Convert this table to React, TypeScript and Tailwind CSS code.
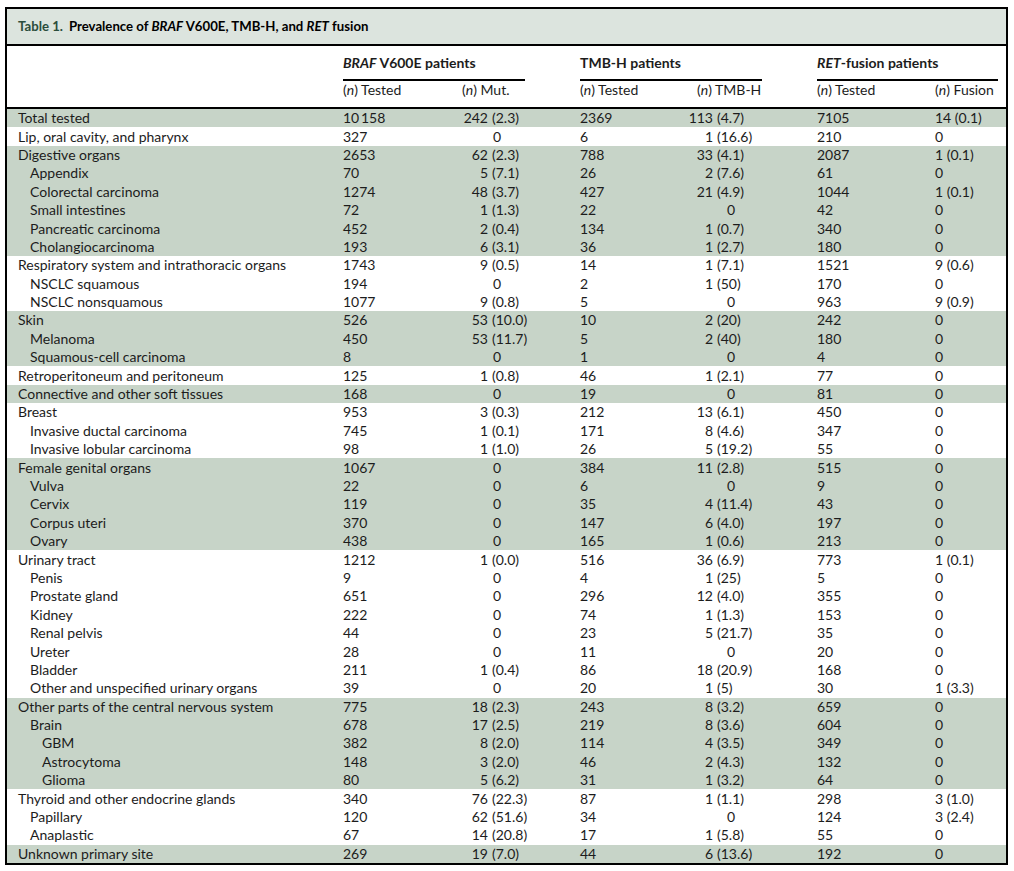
import React from "react";

type Row = { l: string; i: number; v: [string, string, string, string, string, string] };

const groups: { s: boolean; rows: Row[] }[] = [
  { s: true, rows: [{ l: "Total tested", i: 0, v: ["10\u2009158", "242 (2.3)", "2369", "113 (4.7)", "7105", "14 (0.1)"] }] },
  { s: false, rows: [{ l: "Lip, oral cavity, and pharynx", i: 0, v: ["327", "0", "6", "1 (16.6)", "210", "0"] }] },
  {
    s: true,
    rows: [
      { l: "Digestive organs", i: 0, v: ["2653", "62 (2.3)", "788", "33 (4.1)", "2087", "1 (0.1)"] },
      { l: "Appendix", i: 1, v: ["70", "5 (7.1)", "26", "2 (7.6)", "61", "0"] },
      { l: "Colorectal carcinoma", i: 1, v: ["1274", "48 (3.7)", "427", "21 (4.9)", "1044", "1 (0.1)"] },
      { l: "Small intestines", i: 1, v: ["72", "1 (1.3)", "22", "0", "42", "0"] },
      { l: "Pancreatic carcinoma", i: 1, v: ["452", "2 (0.4)", "134", "1 (0.7)", "340", "0"] },
      { l: "Cholangiocarcinoma", i: 1, v: ["193", "6 (3.1)", "36", "1 (2.7)", "180", "0"] },
    ],
  },
  {
    s: false,
    rows: [
      { l: "Respiratory system and intrathoracic organs", i: 0, v: ["1743", "9 (0.5)", "14", "1 (7.1)", "1521", "9 (0.6)"] },
      { l: "NSCLC squamous", i: 1, v: ["194", "0", "2", "1 (50)", "170", "0"] },
      { l: "NSCLC nonsquamous", i: 1, v: ["1077", "9 (0.8)", "5", "0", "963", "9 (0.9)"] },
    ],
  },
  {
    s: true,
    rows: [
      { l: "Skin", i: 0, v: ["526", "53 (10.0)", "10", "2 (20)", "242", "0"] },
      { l: "Melanoma", i: 1, v: ["450", "53 (11.7)", "5", "2 (40)", "180", "0"] },
      { l: "Squamous-cell carcinoma", i: 1, v: ["8", "0", "1", "0", "4", "0"] },
    ],
  },
  { s: false, rows: [{ l: "Retroperitoneum and peritoneum", i: 0, v: ["125", "1 (0.8)", "46", "1 (2.1)", "77", "0"] }] },
  { s: true, rows: [{ l: "Connective and other soft tissues", i: 0, v: ["168", "0", "19", "0", "81", "0"] }] },
  {
    s: false,
    rows: [
      { l: "Breast", i: 0, v: ["953", "3 (0.3)", "212", "13 (6.1)", "450", "0"] },
      { l: "Invasive ductal carcinoma", i: 1, v: ["745", "1 (0.1)", "171", "8 (4.6)", "347", "0"] },
      { l: "Invasive lobular carcinoma", i: 1, v: ["98", "1 (1.0)", "26", "5 (19.2)", "55", "0"] },
    ],
  },
  {
    s: true,
    rows: [
      { l: "Female genital organs", i: 0, v: ["1067", "0", "384", "11 (2.8)", "515", "0"] },
      { l: "Vulva", i: 1, v: ["22", "0", "6", "0", "9", "0"] },
      { l: "Cervix", i: 1, v: ["119", "0", "35", "4 (11.4)", "43", "0"] },
      { l: "Corpus uteri", i: 1, v: ["370", "0", "147", "6 (4.0)", "197", "0"] },
      { l: "Ovary", i: 1, v: ["438", "0", "165", "1 (0.6)", "213", "0"] },
    ],
  },
  {
    s: false,
    rows: [
      { l: "Urinary tract", i: 0, v: ["1212", "1 (0.0)", "516", "36 (6.9)", "773", "1 (0.1)"] },
      { l: "Penis", i: 1, v: ["9", "0", "4", "1 (25)", "5", "0"] },
      { l: "Prostate gland", i: 1, v: ["651", "0", "296", "12 (4.0)", "355", "0"] },
      { l: "Kidney", i: 1, v: ["222", "0", "74", "1 (1.3)", "153", "0"] },
      { l: "Renal pelvis", i: 1, v: ["44", "0", "23", "5 (21.7)", "35", "0"] },
      { l: "Ureter", i: 1, v: ["28", "0", "11", "0", "20", "0"] },
      { l: "Bladder", i: 1, v: ["211", "1 (0.4)", "86", "18 (20.9)", "168", "0"] },
      { l: "Other and unspecified urinary organs", i: 1, v: ["39", "0", "20", "1 (5)", "30", "1 (3.3)"] },
    ],
  },
  {
    s: true,
    rows: [
      { l: "Other parts of the central nervous system", i: 0, v: ["775", "18 (2.3)", "243", "8 (3.2)", "659", "0"] },
      { l: "Brain", i: 1, v: ["678", "17 (2.5)", "219", "8 (3.6)", "604", "0"] },
      { l: "GBM", i: 2, v: ["382", "8 (2.0)", "114", "4 (3.5)", "349", "0"] },
      { l: "Astrocytoma", i: 2, v: ["148", "3 (2.0)", "46", "2 (4.3)", "132", "0"] },
      { l: "Glioma", i: 2, v: ["80", "5 (6.2)", "31", "1 (3.2)", "64", "0"] },
    ],
  },
  {
    s: false,
    rows: [
      { l: "Thyroid and other endocrine glands", i: 0, v: ["340", "76 (22.3)", "87", "1 (1.1)", "298", "3 (1.0)"] },
      { l: "Papillary", i: 1, v: ["120", "62 (51.6)", "34", "0", "124", "3 (2.4)"] },
      { l: "Anaplastic", i: 1, v: ["67", "14 (20.8)", "17", "1 (5.8)", "55", "0"] },
    ],
  },
  { s: true, rows: [{ l: "Unknown primary site", i: 0, v: ["269", "19 (7.0)", "44", "6 (13.6)", "192", "0"] }] },
];

const gridCols = "grid grid-cols-[336px_119px_118px_117px_120px_118px_71px]";

function Split({ text, numW, zeroPad }: { text: string; numW: string; zeroPad: string }) {
  const idx = text.indexOf(" (");
  if (idx < 0) {
    return <span className={zeroPad}>{text}</span>;
  }
  const n = text.slice(0, idx);
  const p = text.slice(idx + 1);
  return (
    <span className="flex whitespace-nowrap">
      <span className={`${numW} flex justify-end shrink-0`}>{n}</span>
      <span className="pl-[4px]">{p}</span>
    </span>
  );
}

export default function App() {
  return (
    <div className="w-[1014px] h-[871px] bg-white pt-[7px] pl-[5px] text-[#1c1c1c]" style={{ fontFamily: "Lato, 'Open Sans', sans-serif" }}>
      <div className="w-[1003px] border-2 border-black">
        <div className="h-[37px] bg-[#dce4de] border-b-2 border-black flex items-center pl-[11px] text-[13.2px] font-bold">
          <span className="text-[#2b4d3c]">Table 1.</span>
          <span className="ml-[6px] text-black">
            Prevalence of <i>BRAF</i> V600E, TMB-H, and <i>RET</i> fusion
          </span>
        </div>
        <div className="h-[63px] border-b-2 border-black text-[14px]">
          <div className={`${gridCols} h-[35px] items-end`}>
            <div />
            <div className="col-span-2">
              <div className="font-bold pb-[9px] leading-none"><i>BRAF</i> V600E patients</div>
              <div className="h-[2px] w-[182px] bg-black" />
            </div>
            <div className="col-span-2">
              <div className="font-bold pb-[9px] leading-none">TMB-H patients</div>
              <div className="h-[2px] w-[182px] bg-black" />
            </div>
            <div className="col-span-2">
              <div className="font-bold pb-[9px] leading-none"><i>RET</i>-fusion patients</div>
              <div className="h-[2px] w-[181px] bg-black" />
            </div>
          </div>
          <div className={`${gridCols} h-[18px] items-center leading-none`}>
            <div />
            <div>(<i>n</i>) Tested</div>
            <div>(<i>n</i>) Mut.</div>
            <div>(<i>n</i>) Tested</div>
            <div>(<i>n</i>) TMB-H</div>
            <div>(<i>n</i>) Tested</div>
            <div>(<i>n</i>) Fusion</div>
          </div>
        </div>
        <div className="text-[14px]">
          {groups.map((g, gi) => (
            <div key={gi} className={g.s ? "bg-[#c7d4c8]" : "bg-white"}>
              {g.rows.map((r, ri) => (
                <div key={ri} className={`${gridCols} h-[18.4px] items-center leading-none`}>
                  <div className={r.i === 0 ? "pl-[11px]" : r.i === 1 ? "pl-[23px]" : "pl-[35px]"}>{r.l}</div>
                  <div>{r.v[0]}</div>
                  <div>
                    <Split text={r.v[1]} numW="w-[26px]" zeroPad="pl-[31px]" />
                  </div>
                  <div>{r.v[2]}</div>
                  <div>
                    <Split text={r.v[3]} numW="w-[16px]" zeroPad="pl-[30px]" />
                  </div>
                  <div>{r.v[4]}</div>
                  <div>{r.v[5]}</div>
                </div>
              ))}
            </div>
          ))}
        </div>
      </div>
    </div>
  );
}
